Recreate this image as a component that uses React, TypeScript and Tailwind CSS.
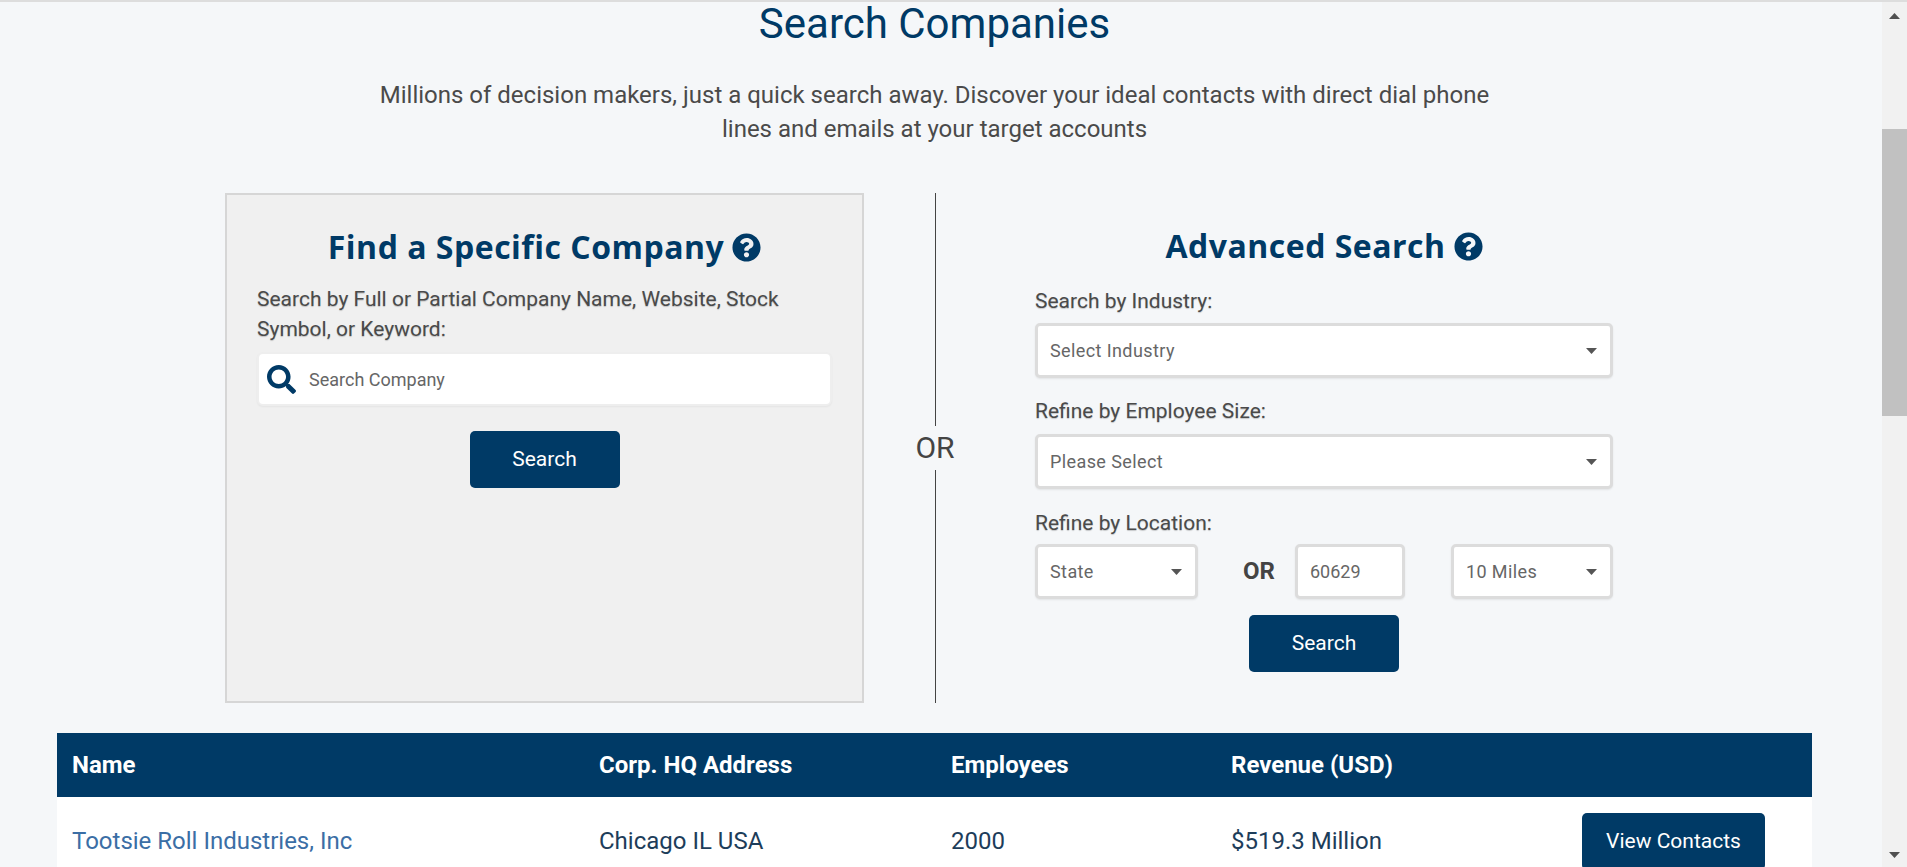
import { FaQuestionCircle, FaSearch } from 'react-icons/fa'

const roboto = { fontFamily: 'Roboto, sans-serif' }

function Caret() {
  return (
    <svg width="11" height="6" viewBox="0 0 11 6" className="shrink-0">
      <path d="M0 0h11L5.5 6z" fill="#555" />
    </svg>
  )
}

function FieldLabel({ children }: { children: string }) {
  return (
    <p className="text-[21px] leading-[30px] text-[#4a4a4a] [text-shadow:0_1px_1px_rgba(0,0,0,0.2)]">
      {children}
    </p>
  )
}

function SelectBox({ value, className }: { value: string; className: string }) {
  return (
    <div
      className={`flex h-[55px] items-center justify-between rounded-[5px] border-[3px] border-[#dcdcdc] bg-white pl-3 pr-[13px] text-[18px] tracking-[0.4px] text-[#666] shadow-[0_1px_2px_rgba(0,0,0,0.08)] ${className}`}
    >
      <span>{value}</span>
      <Caret />
    </div>
  )
}

function SearchButton() {
  return (
    <button className="h-[57px] w-[150px] rounded-[5px] bg-[#003a66] text-[21px] text-white">
      Search
    </button>
  )
}

function Heading({ children }: { children: string }) {
  return (
    <h2 className="flex items-center justify-center gap-[8px] font-['Open_Sans',sans-serif] text-[32px] leading-[44px] font-bold tracking-[0.5px] text-[#003a66]">
      {children}
      <FaQuestionCircle className="size-[29px]" />
    </h2>
  )
}

export default function App() {
  return (
    <div
      className="flex h-[867px] w-[1907px] overflow-hidden border-t-2 border-[#dddddd] bg-[#f5f7f9]"
      style={roboto}
    >
      <main className="h-full w-[1882px] shrink-0 pr-[70px] pl-[57px]">
        <h1 className="text-center text-[42px] leading-[44px] font-normal text-[#003a66]">
          Search Companies
        </h1>
        <p className="mx-auto mt-[32px] w-[1180px] text-center text-[24px] leading-[34px] font-normal text-[#4a4a4a]">
          Millions of decision makers, just a quick search away. Discover your ideal contacts with
          direct dial phone
          <br />
          lines and emails at your target accounts
        </p>

        <div className="mt-[47px] flex h-[510px] pl-[168px]">
          <section className="w-[639px] border-2 border-[#d6d6d6] bg-[#f0f0f0] px-[30px] pt-[30px]">
            <Heading>Find a Specific Company</Heading>
            <div className="mt-[15px]">
              <FieldLabel>Search by Full or Partial Company Name, Website, Stock Symbol, or Keyword:</FieldLabel>
            </div>
            <div className="mt-[8px] flex h-[54px] items-center gap-[13px] rounded-[6px] border-2 border-[#eeeeee] bg-white pl-[8px] shadow-[0_1px_2px_rgba(0,0,0,0.05)]">
              <FaSearch className="size-[29px] shrink-0 text-[#003a66]" />
              <input
                placeholder="Search Company"
                className="w-full bg-transparent text-[18px] outline-none placeholder:text-[#666]"
              />
            </div>
            <div className="mt-[25px] flex justify-center">
              <SearchButton />
            </div>
          </section>

          <div className="flex w-[142px] flex-col items-center">
            <div className="w-px flex-1 bg-[#444]" />
            <span className="py-[5px] text-[30px] leading-[34px] font-normal text-[#444]">OR</span>
            <div className="w-px flex-1 bg-[#444]" />
          </div>

          <section className="ml-[29px] w-[578px] pt-[31px]">
            <Heading>Advanced Search</Heading>
            <div className="mt-[18px]">
              <FieldLabel>Search by Industry:</FieldLabel>
            </div>
            <SelectBox value="Select Industry" className="mt-[7px]" />
            <div className="mt-[18px]">
              <FieldLabel>Refine by Employee Size:</FieldLabel>
            </div>
            <SelectBox value="Please Select" className="mt-[8px]" />
            <div className="mt-[19px]">
              <FieldLabel>Refine by Location:</FieldLabel>
            </div>
            <div className="mt-[6px] flex items-start">
              <SelectBox value="State" className="w-[163px]" />
              <span className="mt-[9px] ml-[45px] text-[24px] font-bold text-[#444]">OR</span>
              <div className="ml-[20px] flex h-[55px] w-[110px] items-center rounded-[5px] border-[3px] border-[#dcdcdc] bg-white pl-[12px] text-[18px] text-[#666] shadow-[0_1px_2px_rgba(0,0,0,0.08)]">
                60629
              </div>
              <SelectBox value="10 Miles" className="ml-[46px] w-[162px]" />
            </div>
            <div className="mt-[16px] flex justify-center">
              <SearchButton />
            </div>
          </section>
        </div>

        <div className="mt-[30px]">
          <div className="flex h-[64px] items-center bg-[#003a66] pl-[15px] text-[24px] font-bold text-white">
            <span className="w-[527px]">Name</span>
            <span className="w-[352px]">Corp. HQ Address</span>
            <span className="w-[280px]">Employees</span>
            <span>Revenue (USD)</span>
          </div>
          <div className="flex h-[120px] items-start bg-white pt-[16px] pl-[15px] text-[24px] font-normal">
            <a className="w-[527px] pt-[10px] text-[#3b6ea5]">Tootsie Roll Industries, Inc</a>
            <span className="w-[352px] pt-[10px] text-[#1d3d5a]">Chicago IL USA</span>
            <span className="w-[280px] pt-[10px] text-[#1d3d5a]">2000</span>
            <span className="w-[351px] pt-[10px] text-[#1d3d5a]">$519.3 Million</span>
            <button className="h-[57px] w-[183px] rounded-[5px] bg-[#003a66] text-[21px] font-normal text-white">
              View Contacts
            </button>
          </div>
        </div>
      </main>

      <aside className="flex h-full w-[25px] shrink-0 flex-col items-center bg-[#f1f1f1]">
        <svg width="11" height="6" viewBox="0 0 11 6" className="mt-[11px]">
          <path d="M0 6h11L5.5 0z" fill="#505050" />
        </svg>
        <div className="mt-[110px] h-[287px] w-full bg-[#c1c1c1]" />
        <svg width="11" height="6" viewBox="0 0 11 6" className="mt-auto mb-[9px]">
          <path d="M0 0h11L5.5 6z" fill="#505050" />
        </svg>
      </aside>
    </div>
  )
}
